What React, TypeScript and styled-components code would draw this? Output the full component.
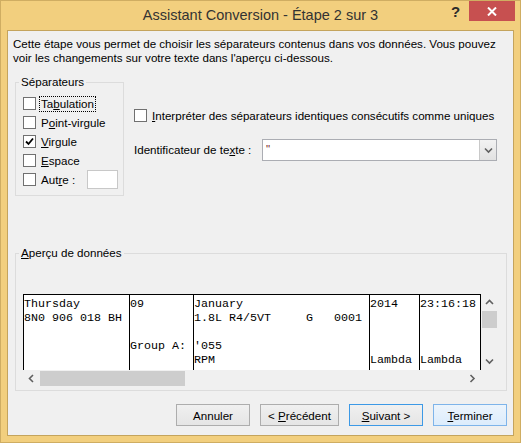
import React from 'react';
import styled, { createGlobalStyle, css } from 'styled-components';

const GlobalStyle = createGlobalStyle`
  html, body {
    margin: 0;
    padding: 0;
    background: #f2cf7e;
  }
  * {
    box-sizing: border-box;
  }
`;

const UI_FONT = `'Liberation Sans', Arial, sans-serif`;

const Window = styled.div`
  width: 521px;
  height: 443px;
  background: #f2cf7e;
  border: 1px solid #cfad62;
  display: flex;
  flex-direction: column;
  font-family: ${UI_FONT};
  font-size: 11.6px;
  color: #000;
`;

const TitleBar = styled.div`
  height: 29px;
  display: grid;
  grid-template-columns: 1fr auto 1fr;
  align-items: start;
`;

const Title = styled.div`
  grid-column: 2;
  padding-top: 5px;
  font-size: 14.5px;
  line-height: 18px;
  color: #333;
`;

const Controls = styled.div`
  grid-column: 3;
  justify-self: end;
  display: flex;
  align-items: flex-start;
  margin-right: 5px;
`;

const HelpButton = styled.div`
  width: 27px;
  padding-top: 3px;
  font-size: 15px;
  font-weight: bold;
  line-height: 16px;
  color: #2b2b2b;
  text-align: center;
`;

const CloseButton = styled.div`
  width: 46px;
  height: 20px;
  background: #c75050;
  display: flex;
  align-items: center;
  justify-content: center;
`;

const Client = styled.div`
  flex: 1;
  margin: 0 6px 6px 6px;
  background: #f0f0f0;
  border: 1px solid #c4a45d;
  display: flex;
  flex-direction: column;
`;

const Intro = styled.p`
  margin: 6px 0 0 5px;
  line-height: 14px;
`;

const OptionsRow = styled.div`
  display: flex;
  margin: 10px 0 0 7px;
`;

const Group = styled.fieldset<{ $width: number }>`
  width: ${p => p.$width}px;
  margin: 0;
  padding: 0;
  border: 1px solid #dcdcdc;
  min-inline-size: 0;
`;

const Legend = styled.legend`
  margin-left: 3px;
  padding: 0 2px;
  line-height: 14px;
`;

const SepList = styled.div`
  display: flex;
  flex-direction: column;
  padding: 5px 0 6px 7px;
`;

const CheckRow = styled.div`
  display: flex;
  align-items: center;
  height: 19px;
`;

const Box = styled.span`
  width: 13px;
  height: 13px;
  flex: none;
  background: #fff;
  border: 1px solid #707070;
  display: flex;
  align-items: center;
  justify-content: center;
`;

const Label = styled.span<{ $focus?: boolean }>`
  margin-left: 3px;
  padding: 0 1px;
  line-height: 14px;
  border: 1px dotted transparent;
  white-space: nowrap;
  ${p =>
    p.$focus &&
    css`
      border-color: #000;
    `}
`;

const Key = styled.span`
  text-decoration: underline;
  text-underline-offset: 1px;
`;

const SmallInput = styled.span`
  width: 31px;
  height: 19px;
  margin-left: 10px;
  background: #fff;
  border: 1px solid #c8c8c8;
`;

const SideOptions = styled.div`
  display: flex;
  flex-direction: column;
  margin-left: 10px;
  padding-top: 31px;
`;

const ComboRow = styled.div`
  display: flex;
  align-items: center;
  margin-top: 14px;
`;

const ComboLabel = styled.span`
  width: 128px;
  line-height: 14px;
`;

const Combo = styled.div`
  width: 235px;
  height: 22px;
  background: #fff;
  border: 1px solid #abadb3;
  display: flex;
`;

const ComboValue = styled.span`
  flex: 1;
  padding: 2px 0 0 3px;
  color: #7a2a2a;
  line-height: 14px;
`;

const ComboButton = styled.span`
  width: 17px;
  background: linear-gradient(#f2f2f2, #e2e2e2);
  border-left: 1px solid #c9c9c9;
  display: flex;
  align-items: center;
  justify-content: center;
`;

const PreviewGroup = styled(Group)`
  margin: 50px 0 0 7px;
`;

const PreviewBody = styled.div`
  padding: 34px 0 3px 7px;
`;

const Preview = styled.div`
  display: grid;
  grid-template-columns: 458px 17px;
  grid-template-rows: 76px 17px;
`;

const Sheet = styled.div`
  background: #fff;
  border-top: 1px solid #000;
  border-right: 1px solid #000;
  overflow: hidden;
  display: flex;
`;

const Column = styled.div<{ $chars: number }>`
  flex: none;
  width: ${p => p.$chars * 7 + 1}px;
  border-left: 1px solid #000;
  padding: 2px 0 0 0;
  font-family: 'Liberation Mono', 'Courier New', monospace;
  font-size: 11.67px;
  line-height: 14px;
  white-space: pre;
`;

const VScroll = styled.div`
  display: flex;
  flex-direction: column;
  align-items: center;
`;

const HScroll = styled.div`
  display: flex;
  align-items: center;
`;

const Arrow = styled.span`
  width: 17px;
  height: 17px;
  flex: none;
  display: flex;
  align-items: center;
  justify-content: center;
`;

const Thumb = styled.span<{ $vertical?: boolean }>`
  background: #cdcdcd;
  flex: none;
  ${p =>
    p.$vertical
      ? css`
          width: 15px;
          height: 17px;
        `
      : css`
          width: 145px;
          height: 15px;
        `}
`;

const Spacer = styled.span`
  flex: 1;
`;

const ButtonBar = styled.div`
  display: flex;
  justify-content: flex-end;
  gap: 10px;
  margin-top: 13px;
  padding-right: 6px;
`;

const Button = styled.button<{ $width: number; $variant?: 'default' | 'hover' }>`
  width: ${p => p.$width}px;
  height: 22px;
  padding: 0;
  font-family: ${UI_FONT};
  font-size: 11.6px;
  color: #000;
  border: 1px solid #adadad;
  background: linear-gradient(#f0f0f0, #e5e5e5);
  ${p =>
    p.$variant === 'default' &&
    css`
      border-color: #3c99e6;
    `}
  ${p =>
    p.$variant === 'hover' &&
    css`
      border-color: #7eb4ea;
      background: linear-gradient(#ecf4fc, #dcecfc);
    `}
`;

const Chevron = ({ dir }: { dir: 'up' | 'down' | 'left' | 'right' }) => {
  const pts = {
    up: '1,5 4.5,1.5 8,5',
    down: '1,1.5 4.5,5 8,1.5',
    left: '5,1 1.5,4.5 5,8',
    right: '1.5,1 5,4.5 1.5,8',
  }[dir];
  const vertical = dir === 'up' || dir === 'down';
  return (
    <svg width={vertical ? 9 : 7} height={vertical ? 7 : 9} viewBox={vertical ? '0 0 9 7' : '0 0 7 9'}>
      <polyline points={pts} fill="none" stroke="#606060" strokeWidth="1.6" />
    </svg>
  );
};

const columns = [
  { chars: 15, lines: ['Thursday', '8N0 906 018 BH', '', '', ''] },
  { chars: 9, lines: ['09', '', '', 'Group A:', ''] },
  { chars: 25, lines: ['January', '1.8L R4/5VT     G   0001', '', "'055", 'RPM'] },
  { chars: 7, lines: ['2014', '', '', '', 'Lambda'] },
  { chars: 9, lines: ['23:16:18', '', '', '', 'Lambda'] },
  { chars: 0, lines: [] },
];

const Separator = ({
  checked,
  focus,
  children,
}: {
  checked?: boolean;
  focus?: boolean;
  children: React.ReactNode;
}) => (
  <CheckRow>
    <Box>
      {checked && (
        <svg width="9" height="9" viewBox="0 0 9 9">
          <polyline points="1,4.5 3.5,7 8,1.5" fill="none" stroke="#000" strokeWidth="1.8" />
        </svg>
      )}
    </Box>
    <Label $focus={focus}>{children}</Label>
  </CheckRow>
);

export default function App() {
  return (
    <>
      <GlobalStyle />
      <Window>
        <TitleBar>
          <Title>Assistant Conversion - Étape 2 sur 3</Title>
          <Controls>
            <HelpButton>?</HelpButton>
            <CloseButton>
              <svg width="10" height="9" viewBox="0 0 10 9">
                <path d="M1 0.5 L9 8.5 M9 0.5 L1 8.5" stroke="#fff" strokeWidth="2" />
              </svg>
            </CloseButton>
          </Controls>
        </TitleBar>
        <Client>
          <Intro>
            Cette étape vous permet de choisir les séparateurs contenus dans vos données. Vous pouvez
            <br />
            voir les changements sur votre texte dans l'aperçu ci-dessous.
          </Intro>

          <OptionsRow>
            <Group $width={109}>
              <Legend>Séparateurs</Legend>
              <SepList>
                <Separator focus>
                  Ta<Key>b</Key>ulation
                </Separator>
                <Separator>
                  P<Key>o</Key>int-virgule
                </Separator>
                <Separator checked>
                  <Key>V</Key>irgule
                </Separator>
                <Separator>
                  <Key>E</Key>space
                </Separator>
                <CheckRow>
                  <Box />
                  <Label>
                    Aut<Key>r</Key>e :
                  </Label>
                  <SmallInput />
                </CheckRow>
              </SepList>
            </Group>

            <SideOptions>
              <CheckRow>
                <Box />
                <Label>
                  <Key>I</Key>nterpréter des séparateurs identiques consécutifs comme uniques
                </Label>
              </CheckRow>
              <ComboRow>
                <ComboLabel>
                  Identificateur de te<Key>x</Key>te :
                </ComboLabel>
                <Combo>
                  <ComboValue>"</ComboValue>
                  <ComboButton>
                    <Chevron dir="down" />
                  </ComboButton>
                </Combo>
              </ComboRow>
            </SideOptions>
          </OptionsRow>

          <PreviewGroup $width={492}>
            <Legend>
              <Key>A</Key>perçu de données
            </Legend>
            <PreviewBody>
              <Preview>
                <Sheet>
                  {columns.map((col, i) => (
                    <Column key={i} $chars={col.chars}>
                      {col.lines.join('\n')}
                    </Column>
                  ))}
                </Sheet>
                <VScroll>
                  <Arrow>
                    <Chevron dir="up" />
                  </Arrow>
                  <Thumb $vertical />
                  <Spacer />
                  <Arrow>
                    <Chevron dir="down" />
                  </Arrow>
                </VScroll>
                <HScroll>
                  <Arrow>
                    <Chevron dir="left" />
                  </Arrow>
                  <Thumb />
                  <Spacer />
                  <Arrow>
                    <Chevron dir="right" />
                  </Arrow>
                </HScroll>
                <span />
              </Preview>
            </PreviewBody>
          </PreviewGroup>

          <ButtonBar>
            <Button $width={74}>Annuler</Button>
            <Button $width={79}>
              &lt; <Key>P</Key>récédent
            </Button>
            <Button $width={74} $variant="default">
              <Key>S</Key>uivant &gt;
            </Button>
            <Button $width={74} $variant="hover">
              <Key>T</Key>erminer
            </Button>
          </ButtonBar>
        </Client>
      </Window>
    </>
  );
}
